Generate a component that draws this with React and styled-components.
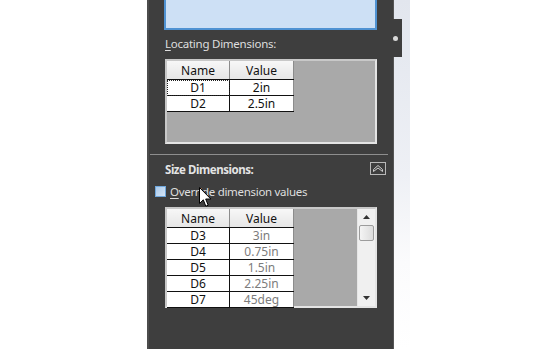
import styled, { createGlobalStyle } from "styled-components";

const GlobalStyle = createGlobalStyle`
  html, body {
    margin: 0;
    padding: 0;
    background: #ffffff;
    overflow: hidden;
  }
  body {
    font-family: "Noto Sans", "Liberation Sans", sans-serif;
    font-size: 12px;
  }
`;

const locating = [
  { name: "D1", value: "2in", focus: true },
  { name: "D2", value: "2.5in" },
];

const sizes = [
  { name: "D3", value: "3in" },
  { name: "D4", value: "0.75in" },
  { name: "D5", value: "1.5in" },
  { name: "D6", value: "2.25in" },
  { name: "D7", value: "45deg" },
];

const App = () => {
  return (
    <Page>
      <GlobalStyle />
      <Gutter />
      <Panel>
        <Selection />
        <Label>
          <u>L</u>ocating Dimensions:
        </Label>
        <GridBox height={81} gap={7}>
          <DimTable rows={locating} />
        </GridBox>
        <Divider />
        <SectionHead>
          <SectionTitle>Size Dimensions:</SectionTitle>
          <Collapse>
            <svg width="12" height="9" viewBox="0 0 12 9" fill="none">
              <path
                d="M1.5 7.5 L1.5 5.5 L6 1.5 L10.5 5.5 L10.5 7.5 L6 4 Z"
                stroke="#cfcfcf"
                strokeWidth="1"
                strokeLinejoin="round"
              />
            </svg>
          </Collapse>
        </SectionHead>
        <CheckRow>
          <Check />
          <CheckText>
            <u>O</u>verride dimension values
          </CheckText>
          <Pointer width="13" height="21" viewBox="0 0 13 21">
            <path
              d="M0.5 0.5 L0.5 16.5 L4.3 12.8 L6.8 19.2 L9.2 18.2 L6.7 12 L11.8 12 Z"
              fill="#ffffff"
              stroke="#000000"
              strokeWidth="1"
              strokeLinejoin="miter"
            />
          </Pointer>
        </CheckRow>
        <GridBox height={97} gap={9}>
          <DimTable rows={sizes} disabled />
          <Scrollbar>
            <Arrow>
              <svg width="7" height="4" viewBox="0 0 7 4">
                <path d="M0 4 L3.5 0 L7 4 Z" fill="#333" />
              </svg>
            </Arrow>
            <Thumb />
            <Track />
            <Arrow>
              <svg width="7" height="4" viewBox="0 0 7 4">
                <path d="M0 0 L3.5 4 L7 0 Z" fill="#333" />
              </svg>
            </Arrow>
          </Scrollbar>
        </GridBox>
        <Tab>
          <Dot />
        </Tab>
      </Panel>
      <Strip />
    </Page>
  );
};

const DimTable = ({ rows, disabled }) => (
  <Table>
    <thead>
      <tr>
        <Head>Name</Head>
        <Head>Value</Head>
      </tr>
    </thead>
    <tbody>
      {rows.map((r) => (
        <tr key={r.name}>
          <NameCell focus={r.focus ? 1 : 0}>{r.name}</NameCell>
          <ValueCell disabled={disabled ? 1 : 0}>{r.value}</ValueCell>
        </tr>
      ))}
    </tbody>
  </Table>
);

const Page = styled.div`
  display: flex;
  width: 555px;
  height: 349px;
`;

const Gutter = styled.div`
  width: 147px;
  flex: none;
`;

const Panel = styled.div`
  position: relative;
  width: 244px;
  flex: none;
  background: #3e3e3e;
  border-left: 2px solid #4c4c4c;
  display: flex;
  flex-direction: column;
  color: #dedede;
`;

const Strip = styled.div`
  width: 16px;
  flex: none;
  border-left: 1px solid #555;
  background: linear-gradient(to bottom, #e2e6ee 0%, #eef0f5 50%, #fbfbfc 75%, #ffffff 100%);
`;

const Selection = styled.div`
  margin-left: 15px;
  width: 209px;
  height: 28px;
  background: #cde0f5;
  border: 2px solid #4f92d2;
  border-top: none;
`;

const Label = styled.div`
  margin: 6px 0 0 16px;
  height: 16px;
  line-height: 16px;
  font-size: 11.5px;
  letter-spacing: -0.25px;
  u {
    text-decoration: underline;
    text-underline-offset: 2px;
  }
`;

const GridBox = styled.div`
  margin: ${(p) => p.gap}px 0 0 16px;
  width: 208px;
  height: ${(p) => p.height}px;
  background: #a9a9a9;
  border: 2px solid #e4e4e4;
  border-top-color: #c8c8c8;
  border-left-color: #c8c8c8;
  display: flex;
  justify-content: space-between;
  align-items: flex-start;
`;

const Table = styled.table`
  border-collapse: collapse;
  color: #111;
  font-size: 12px;
`;

const Head = styled.th`
  width: 62px;
  height: 18px;
  padding: 0;
  font-weight: normal;
  text-align: center;
  background: linear-gradient(to bottom, #f7f7f7, #e6e6e6);
  border-right: 1px solid #8c8c8c;
  border-bottom: 1px solid #111;
  & + & {
    width: 63px;
  }
`;

const NameCell = styled.td`
  height: 15px;
  padding: 0;
  line-height: 15px;
  text-align: center;
  background: #fff;
  border-bottom: 1px solid #111;
  border-right: 1px solid #111;
  outline: ${(p) => (p.focus ? "1px dotted #222" : "none")};
  outline-offset: -1px;
`;

const ValueCell = styled.td`
  height: 15px;
  padding: 0;
  line-height: 15px;
  text-align: center;
  background: #fff;
  color: ${(p) => (p.disabled ? "#7c7c7c" : "#111")};
  border-bottom: 1px solid #111;
  border-right: 1px solid #8c8c8c;
`;

const Divider = styled.div`
  margin: 10px 0 0 1px;
  width: 238px;
  height: 1px;
  background: #8e8e8e;
`;

const SectionHead = styled.div`
  display: flex;
  align-items: center;
  justify-content: space-between;
  margin: 7px 0 0 16px;
  width: 221px;
  height: 13px;
`;

const SectionTitle = styled.div`
  font-weight: bold;
  font-size: 11.5px;
  letter-spacing: -0.45px;
  color: #e4e4e4;
  margin-top: 2px;
`;

const Collapse = styled.div`
  width: 14px;
  height: 11px;
  border: 1px solid #b8b8b8;
  display: flex;
  align-items: center;
  justify-content: center;
`;

const CheckRow = styled.div`
  position: relative;
  display: flex;
  align-items: center;
  gap: 4px;
  margin: 9px 0 0 6px;
  height: 14px;
`;

const Check = styled.div`
  width: 9px;
  height: 9px;
  border: 1px solid #6fa7dc;
  background: linear-gradient(135deg, #a9c9ea, #d6e6f7);
`;

const CheckText = styled.div`
  font-size: 11.5px;
  letter-spacing: -0.3px;
  u {
    text-decoration: underline;
    text-underline-offset: 2px;
  }
`;

const Pointer = styled.svg`
  position: absolute;
  left: 44px;
  top: 3px;
`;

const Scrollbar = styled.div`
  align-self: stretch;
  width: 17px;
  background: #f0f0f0;
  border-left: 1px solid #e6e6e6;
  display: flex;
  flex-direction: column;
  align-items: center;
`;

const Arrow = styled.div`
  height: 16px;
  width: 17px;
  display: flex;
  align-items: center;
  justify-content: center;
`;

const Thumb = styled.div`
  width: 13px;
  height: 14px;
  border: 1px solid #9c9c9c;
  border-radius: 2px;
  background: linear-gradient(to right, #f4f4f4, #dcdcdc);
`;

const Track = styled.div`
  flex: 1;
`;

const Tab = styled.div`
  position: absolute;
  right: -9px;
  top: 19px;
  width: 9px;
  height: 38px;
  background: #3e3e3e;
  display: flex;
  align-items: center;
  justify-content: center;
`;

const Dot = styled.div`
  width: 5px;
  height: 5px;
  border-radius: 50%;
  background: #d8d8d8;
  margin-left: -4px;
`;

export default App;
